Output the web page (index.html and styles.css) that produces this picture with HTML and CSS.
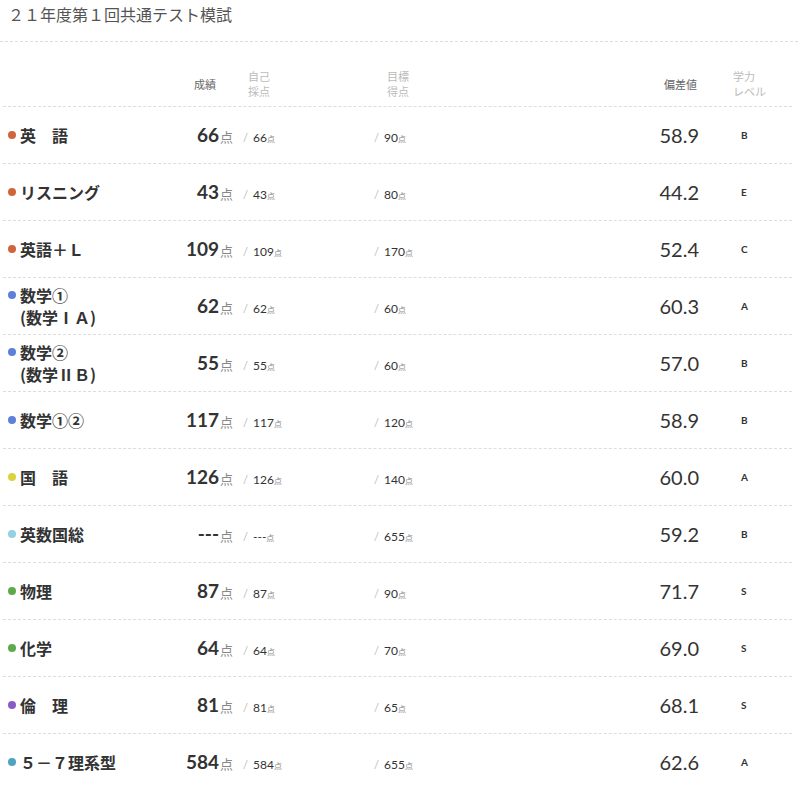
FILE: index.html
```html
<!DOCTYPE html>
<html lang="ja">
<head>
<meta charset="utf-8">
<link rel="stylesheet" href="styles.css">
</head>
<body>
<div class="page">
  <h1 class="title">２１年度第１回共通テスト模試</h1>
  <div class="table">
    <div class="row head">
      <div class="c-name"></div>
      <div class="c-score h-score">成績</div>
      <div class="c-self h-light">自己<br>採点</div>
      <div class="c-target h-light h-target">目標<br>得点</div>
      <div class="c-dev h-dev">偏差値</div>
      <div class="c-level h-light h-level">学力<br>レベル</div>
    </div>

    <div class="row">
      <div class="c-name"><span class="dot orange"></span><span class="name">英　語</span></div>
      <div class="c-score"><span class="big">66</span><span class="ten">点</span></div>
      <div class="c-self"><span class="sl">/</span><span class="sm">66</span><span class="ten-s">点</span></div>
      <div class="c-target"><span class="sl">/</span><span class="sm">90</span><span class="ten-s">点</span></div>
      <div class="c-dev">58.9</div>
      <div class="c-level">B</div>
    </div>

    <div class="row">
      <div class="c-name"><span class="dot orange"></span><span class="name">リスニング</span></div>
      <div class="c-score"><span class="big">43</span><span class="ten">点</span></div>
      <div class="c-self"><span class="sl">/</span><span class="sm">43</span><span class="ten-s">点</span></div>
      <div class="c-target"><span class="sl">/</span><span class="sm">80</span><span class="ten-s">点</span></div>
      <div class="c-dev">44.2</div>
      <div class="c-level">E</div>
    </div>

    <div class="row">
      <div class="c-name"><span class="dot orange"></span><span class="name">英語＋Ｌ</span></div>
      <div class="c-score"><span class="big">109</span><span class="ten">点</span></div>
      <div class="c-self"><span class="sl">/</span><span class="sm">109</span><span class="ten-s">点</span></div>
      <div class="c-target"><span class="sl">/</span><span class="sm">170</span><span class="ten-s">点</span></div>
      <div class="c-dev">52.4</div>
      <div class="c-level">C</div>
    </div>

    <div class="row">
      <div class="c-name"><span class="dot blue"></span><span class="name">数学①<br>(数学ⅠＡ)</span></div>
      <div class="c-score"><span class="big">62</span><span class="ten">点</span></div>
      <div class="c-self"><span class="sl">/</span><span class="sm">62</span><span class="ten-s">点</span></div>
      <div class="c-target"><span class="sl">/</span><span class="sm">60</span><span class="ten-s">点</span></div>
      <div class="c-dev">60.3</div>
      <div class="c-level">A</div>
    </div>

    <div class="row">
      <div class="c-name"><span class="dot blue"></span><span class="name">数学②<br>(数学ⅡＢ)</span></div>
      <div class="c-score"><span class="big">55</span><span class="ten">点</span></div>
      <div class="c-self"><span class="sl">/</span><span class="sm">55</span><span class="ten-s">点</span></div>
      <div class="c-target"><span class="sl">/</span><span class="sm">60</span><span class="ten-s">点</span></div>
      <div class="c-dev">57.0</div>
      <div class="c-level">B</div>
    </div>

    <div class="row">
      <div class="c-name"><span class="dot blue"></span><span class="name">数学①②</span></div>
      <div class="c-score"><span class="big">117</span><span class="ten">点</span></div>
      <div class="c-self"><span class="sl">/</span><span class="sm">117</span><span class="ten-s">点</span></div>
      <div class="c-target"><span class="sl">/</span><span class="sm">120</span><span class="ten-s">点</span></div>
      <div class="c-dev">58.9</div>
      <div class="c-level">B</div>
    </div>

    <div class="row">
      <div class="c-name"><span class="dot yellow"></span><span class="name">国　語</span></div>
      <div class="c-score"><span class="big">126</span><span class="ten">点</span></div>
      <div class="c-self"><span class="sl">/</span><span class="sm">126</span><span class="ten-s">点</span></div>
      <div class="c-target"><span class="sl">/</span><span class="sm">140</span><span class="ten-s">点</span></div>
      <div class="c-dev">60.0</div>
      <div class="c-level">A</div>
    </div>

    <div class="row">
      <div class="c-name"><span class="dot cyan"></span><span class="name">英数国総</span></div>
      <div class="c-score"><span class="big">---</span><span class="ten">点</span></div>
      <div class="c-self"><span class="sl">/</span><span class="sm">---</span><span class="ten-s">点</span></div>
      <div class="c-target"><span class="sl">/</span><span class="sm">655</span><span class="ten-s">点</span></div>
      <div class="c-dev">59.2</div>
      <div class="c-level">B</div>
    </div>

    <div class="row">
      <div class="c-name"><span class="dot green"></span><span class="name">物理</span></div>
      <div class="c-score"><span class="big">87</span><span class="ten">点</span></div>
      <div class="c-self"><span class="sl">/</span><span class="sm">87</span><span class="ten-s">点</span></div>
      <div class="c-target"><span class="sl">/</span><span class="sm">90</span><span class="ten-s">点</span></div>
      <div class="c-dev">71.7</div>
      <div class="c-level">S</div>
    </div>

    <div class="row">
      <div class="c-name"><span class="dot green"></span><span class="name">化学</span></div>
      <div class="c-score"><span class="big">64</span><span class="ten">点</span></div>
      <div class="c-self"><span class="sl">/</span><span class="sm">64</span><span class="ten-s">点</span></div>
      <div class="c-target"><span class="sl">/</span><span class="sm">70</span><span class="ten-s">点</span></div>
      <div class="c-dev">69.0</div>
      <div class="c-level">S</div>
    </div>

    <div class="row">
      <div class="c-name"><span class="dot purple"></span><span class="name">倫　理</span></div>
      <div class="c-score"><span class="big">81</span><span class="ten">点</span></div>
      <div class="c-self"><span class="sl">/</span><span class="sm">81</span><span class="ten-s">点</span></div>
      <div class="c-target"><span class="sl">/</span><span class="sm">65</span><span class="ten-s">点</span></div>
      <div class="c-dev">68.1</div>
      <div class="c-level">S</div>
    </div>

    <div class="row">
      <div class="c-name"><span class="dot teal"></span><span class="name">５－７理系型</span></div>
      <div class="c-score"><span class="big">584</span><span class="ten">点</span></div>
      <div class="c-self"><span class="sl">/</span><span class="sm">584</span><span class="ten-s">点</span></div>
      <div class="c-target"><span class="sl">/</span><span class="sm">655</span><span class="ten-s">点</span></div>
      <div class="c-dev">62.6</div>
      <div class="c-level">A</div>
    </div>
  </div>
</div>
</body>
</html>
```

FILE: styles.css
```css
* { box-sizing: border-box; }
html, body { margin: 0; padding: 0; background: #fff; }
body {
  font-family: "Noto Sans CJK JP", "Noto Sans", sans-serif;
  color: #333;
}
.page { width: 798px; }
.title {
  margin: 0;
  height: 42px;
  padding-left: 8px;
  font-size: 16px;
  line-height: 28px;
  font-weight: 400;
  color: #555;
  border-bottom: 1px dashed #ddd;
}
.table { margin: 0 6px 0 3px; }
.row {
  display: grid;
  grid-template-columns: 167px 63px 141px 266px 59px 1fr;
  align-items: center;
  height: 57px;
  border-bottom: 1px dashed #ddd;
}
.row.head { height: 65px; padding-top: 20px; }
.c-name {
  display: flex;
  align-items: flex-start;
  padding-left: 5px;
}
.dot {
  width: 8px; height: 8px; border-radius: 50%;
  margin-top: 7px; margin-right: 4px; flex: none;
}
.orange { background: #d2643c; }
.blue { background: #5d80d8; }
.yellow { background: #dcd23e; }
.cyan { background: #92d2de; }
.green { background: #5daa4a; }
.purple { background: #8a5bc6; }
.teal { background: #4ea3c2; }
.name {
  font-size: 16px;
  font-weight: 700;
  line-height: 22px;
  color: #333;
}
.c-score { text-align: right; white-space: nowrap; }
.big {
  font-family: Lato, "Noto Sans", sans-serif;
  font-weight: 700;
  font-size: 19px;
  color: #333;
}
.ten { font-size: 13px; color: #888; margin-left: 1px; }
.c-self { padding-left: 10px; white-space: nowrap; }
.c-target { white-space: nowrap; }
.sl {
  font-family: Lato, sans-serif;
  font-size: 11px; color: #bbb; margin-right: 5px;
}
.sm {
  font-family: Lato, sans-serif;
  font-size: 12px; color: #333;
}
.ten-s { font-size: 8px; color: #888; }
.c-dev {
  text-align: right;
  font-family: Lato, sans-serif;
  font-size: 20px;
  font-weight: 400;
  color: #333;
}
.c-level {
  padding-left: 42px;
  font-family: Lato, sans-serif;
  font-size: 10px;
  font-weight: 700;
  color: #333;
}
.head .c-score, .head .c-dev {
  font-family: "Noto Sans CJK JP", sans-serif;
  font-size: 11px; font-weight: 400; color: #666;
}
.h-score { padding-right: 17px; }
.h-light { font-size: 11px; line-height: 15px; color: #bbb; }
.head .c-self { padding-left: 15px; }
.h-target { padding-left: 13px; }
.h-dev { padding-right: 2px; }
.head .c-level { padding-left: 34px; font-family: "Noto Sans CJK JP", sans-serif; font-weight: 400; color: #bbb; }
```
